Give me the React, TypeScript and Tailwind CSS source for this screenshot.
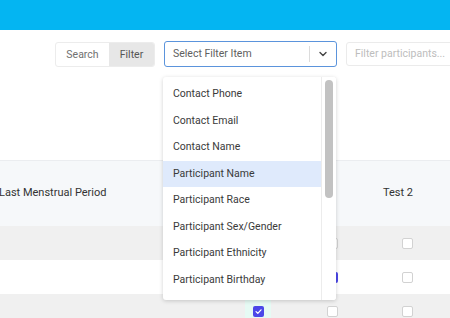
import React from "react";

const items = [
  "Contact Phone",
  "Contact Email",
  "Contact Name",
  "Participant Name",
  "Participant Race",
  "Participant Sex/Gender",
  "Participant Ethnicity",
  "Participant Birthday",
];

function Box({ checked = false }: { checked?: boolean }) {
  if (checked) {
    return (
      <span className="flex h-[11px] w-[11px] items-center justify-center rounded-[2px] bg-[#4b47e8]">
        <svg width="7" height="7" viewBox="0 0 10 10" fill="none">
          <path d="M1.5 5.2 4 7.6 8.6 2.6" stroke="white" strokeWidth="1.8" strokeLinecap="round" strokeLinejoin="round" />
        </svg>
      </span>
    );
  }
  return <span className="block h-[11px] w-[11px] rounded-[2px] border border-[#d2d2d2] bg-white" />;
}

type Row = { bg: string; c2: boolean; c3: boolean; c4: boolean; mint?: boolean };

const rows: Row[] = [
  { bg: "bg-[#f0f0f0]", c2: false, c3: false, c4: false },
  { bg: "bg-white", c2: false, c3: true, c4: false },
  { bg: "bg-[#f0f0f0]", c2: true, c3: false, c4: false, mint: true },
];

export default function App() {
  return (
    <div className="relative h-[318px] w-[450px] overflow-hidden bg-white font-['Roboto','Liberation_Sans',sans-serif]">
      <div className="h-[30px] bg-[#04b5f2]" />

      <div className="flex h-[130px] items-start gap-[9px] pl-[55px] pt-[11px]">
        <div className="mt-[1px] flex h-[25px] shrink-0 overflow-hidden rounded-[3px] border border-[#ececec] text-[10.5px]">
          <div className="flex w-[53px] items-center justify-center text-[#707070]">Search</div>
          <div className="flex w-[45px] items-center justify-center bg-[#e7e7e7] text-[#555]">Filter</div>
        </div>

        <div className="flex h-[26px] w-[173px] shrink-0 items-center rounded-[3px] border border-[#5b94dc] bg-white">
          <span className="flex-1 pl-[8px] text-[10.5px] text-[#606060]">Select Filter Item</span>
          <span className="h-[16px] w-px bg-[#dcdcdc]" />
          <span className="flex w-[26px] items-center justify-center">
            <svg width="10" height="10" viewBox="0 0 10 10" fill="none">
              <path d="M2 3.6 5 6.6 8 3.6" stroke="#444" strokeWidth="1.4" strokeLinecap="round" strokeLinejoin="round" />
            </svg>
          </span>
        </div>

        <div className="mt-[1px] flex h-[24px] w-[120px] shrink-0 items-center rounded-[3px] border border-[#ebebeb] pl-[8px] text-[10.5px] text-[#bdbdbd]">
          Filter participants...
        </div>
      </div>

      <div className="border-t border-[#ebedf0]">
        <div className="grid h-[65px] grid-cols-[220px_76px_72px_82px] items-center bg-[#f6f8fa] text-[11px] text-[#333]">
          <div className="-ml-[1px]">Last Menstrual Period</div>
          <div />
          <div />
          <div className="pl-[15px]">Test 2</div>
        </div>
        {rows.map((r, i) => (
          <div key={i} className={`grid h-[34px] grid-cols-[220px_76px_72px_82px] items-center ${r.bg}`}>
            <div />
            <div className="flex justify-center">
              {r.mint ? (
                <span className="flex h-[22px] w-[26px] items-center justify-center bg-[#e6faf4]">
                  <Box checked={r.c2} />
                </span>
              ) : (
                <Box checked={r.c2} />
              )}
            </div>
            <div className="flex justify-center">
              <Box checked={r.c3} />
            </div>
            <div className="pl-[34px]">
              <Box checked={r.c4} />
            </div>
          </div>
        ))}
      </div>

      <div className="absolute left-[163px] top-[77px] flex h-[223px] w-[173px] overflow-hidden rounded-[3px] bg-white shadow-[0_1px_4px_rgba(0,0,0,0.18)]">
        <div className="flex-1 pt-[4px]">
          {items.map((t) => (
            <div
              key={t}
              className={`flex h-[26.5px] items-center pl-[10px] text-[10.5px] text-[#3a3a3a] ${
                t === "Participant Name" ? "bg-[#dfeafc]" : ""
              }`}
            >
              {t}
            </div>
          ))}
        </div>
        <div className="w-[15px] border-l border-[#ececec] bg-white pl-[3px] pt-[3px]">
          <div className="h-[118px] w-[8px] rounded-[4px] bg-[#c2c2c2]" />
        </div>
      </div>
    </div>
  );
}
